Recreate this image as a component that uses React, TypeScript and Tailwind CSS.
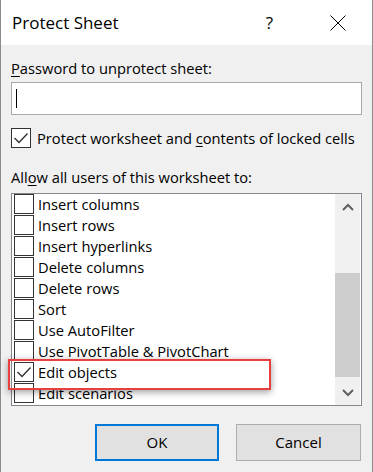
import React from "react";

const ITEMS = [
  { label: "Insert columns", checked: false },
  { label: "Insert rows", checked: false },
  { label: "Insert hyperlinks", checked: false },
  { label: "Delete columns", checked: false },
  { label: "Delete rows", checked: false },
  { label: "Sort", checked: false },
  { label: "Use AutoFilter", checked: false },
  { label: "Use PivotTable & PivotChart", checked: false },
  { label: "Edit objects", checked: true },
  { label: "Edit scenarios", checked: false },
];

function CheckBox({ checked }: { checked: boolean }) {
  return (
    <div className="w-[20px] h-[20px] shrink-0 border border-[#333333] bg-white flex items-center justify-center">
      {checked && (
        <svg width="18" height="18" viewBox="0 0 18 18">
          <polyline points="2.5,9 7,13.5 15.5,4.5" fill="none" stroke="#333333" strokeWidth="1.4" />
        </svg>
      )}
    </div>
  );
}

export default function App() {
  return (
    <div className="relative w-[373px] h-[472px] overflow-hidden bg-[#f0f0f0] border-x border-[#8c8c8c] font-['Segoe_UI','Open_Sans',sans-serif] text-black">
      {/* title bar */}
      <div className="h-[45px] bg-white flex items-center">
        <span className="ml-[11px] text-[17px] leading-none">Protect Sheet</span>
        <span className="ml-auto text-[17px] leading-none mr-[57px]">?</span>
        <svg width="16" height="16" viewBox="0 0 16 16" className="mr-[26px]">
          <path d="M0.5 0.5 L15.5 15.5 M15.5 0.5 L0.5 15.5" stroke="#000" strokeWidth="1" />
        </svg>
      </div>

      <div className="px-[10px] text-[14.7px]">
        <div className="mt-[13px] h-[20px] leading-[20px]">
          <span className="underline underline-offset-2">P</span>assword to unprotect sheet:
        </div>
        <div className="mt-[4px] h-[33px] bg-white border border-[#a9a9a9] flex items-center pl-[4px]">
          <div className="w-px h-[19px] bg-black" />
        </div>

        <div className="mt-[13px] h-[20px] flex items-center gap-[6px]">
          <CheckBox checked />
          <span className="leading-[20px]">
            Protect worksheet and <span className="underline underline-offset-2">c</span>ontents of locked cells
          </span>
        </div>

        <div className="mt-[19px] h-[20px] leading-[20px]">
          All<span className="underline underline-offset-2">o</span>w all users of this worksheet to:
        </div>

        <div className="mt-[6px] h-[213px] bg-white border border-[#828790] flex overflow-hidden">
          <div className="flex-1 pl-[2px] flex flex-col gap-[1px]">
            {ITEMS.map((it) => (
              <div key={it.label} className="h-[20px] shrink-0 flex items-center gap-[4px]">
                <CheckBox checked={it.checked} />
                <span className="leading-[20px] whitespace-nowrap">{it.label}</span>
              </div>
            ))}
          </div>
          <div className="w-[25px] mr-[1px] bg-[#f0f0f0] flex flex-col">
            <div className="h-[25px] flex items-center justify-center">
              <svg width="12" height="8" viewBox="0 0 12 8">
                <polyline points="1,7 6,2 11,7" fill="none" stroke="#606060" strokeWidth="2" />
              </svg>
            </div>
            <div className="flex-1 pt-[54px]">
              <div className="h-[104px] bg-[#cdcdcd]" />
            </div>
            <div className="h-[25px] flex items-center justify-center">
              <svg width="12" height="8" viewBox="0 0 12 8">
                <polyline points="1,1 6,6 11,1" fill="none" stroke="#606060" strokeWidth="2" />
              </svg>
            </div>
          </div>
        </div>

        <div className="mt-[18px] flex justify-end gap-[17px] pr-[1px]">
          <button className="w-[124px] h-[37px] bg-[#e1e1e1] border-2 border-[#0078d7] text-[15px]">OK</button>
          <button className="w-[125px] h-[37px] bg-[#e1e1e1] border border-[#adadad] text-[15px]">Cancel</button>
        </div>
      </div>

      {/* red highlight annotation */}
      <div className="absolute left-[7px] top-[359px] w-[263px] h-[31px] border-2 border-[#e8403f] shadow-[0_2px_7px_rgba(0,0,0,0.4)]" />
    </div>
  );
}
